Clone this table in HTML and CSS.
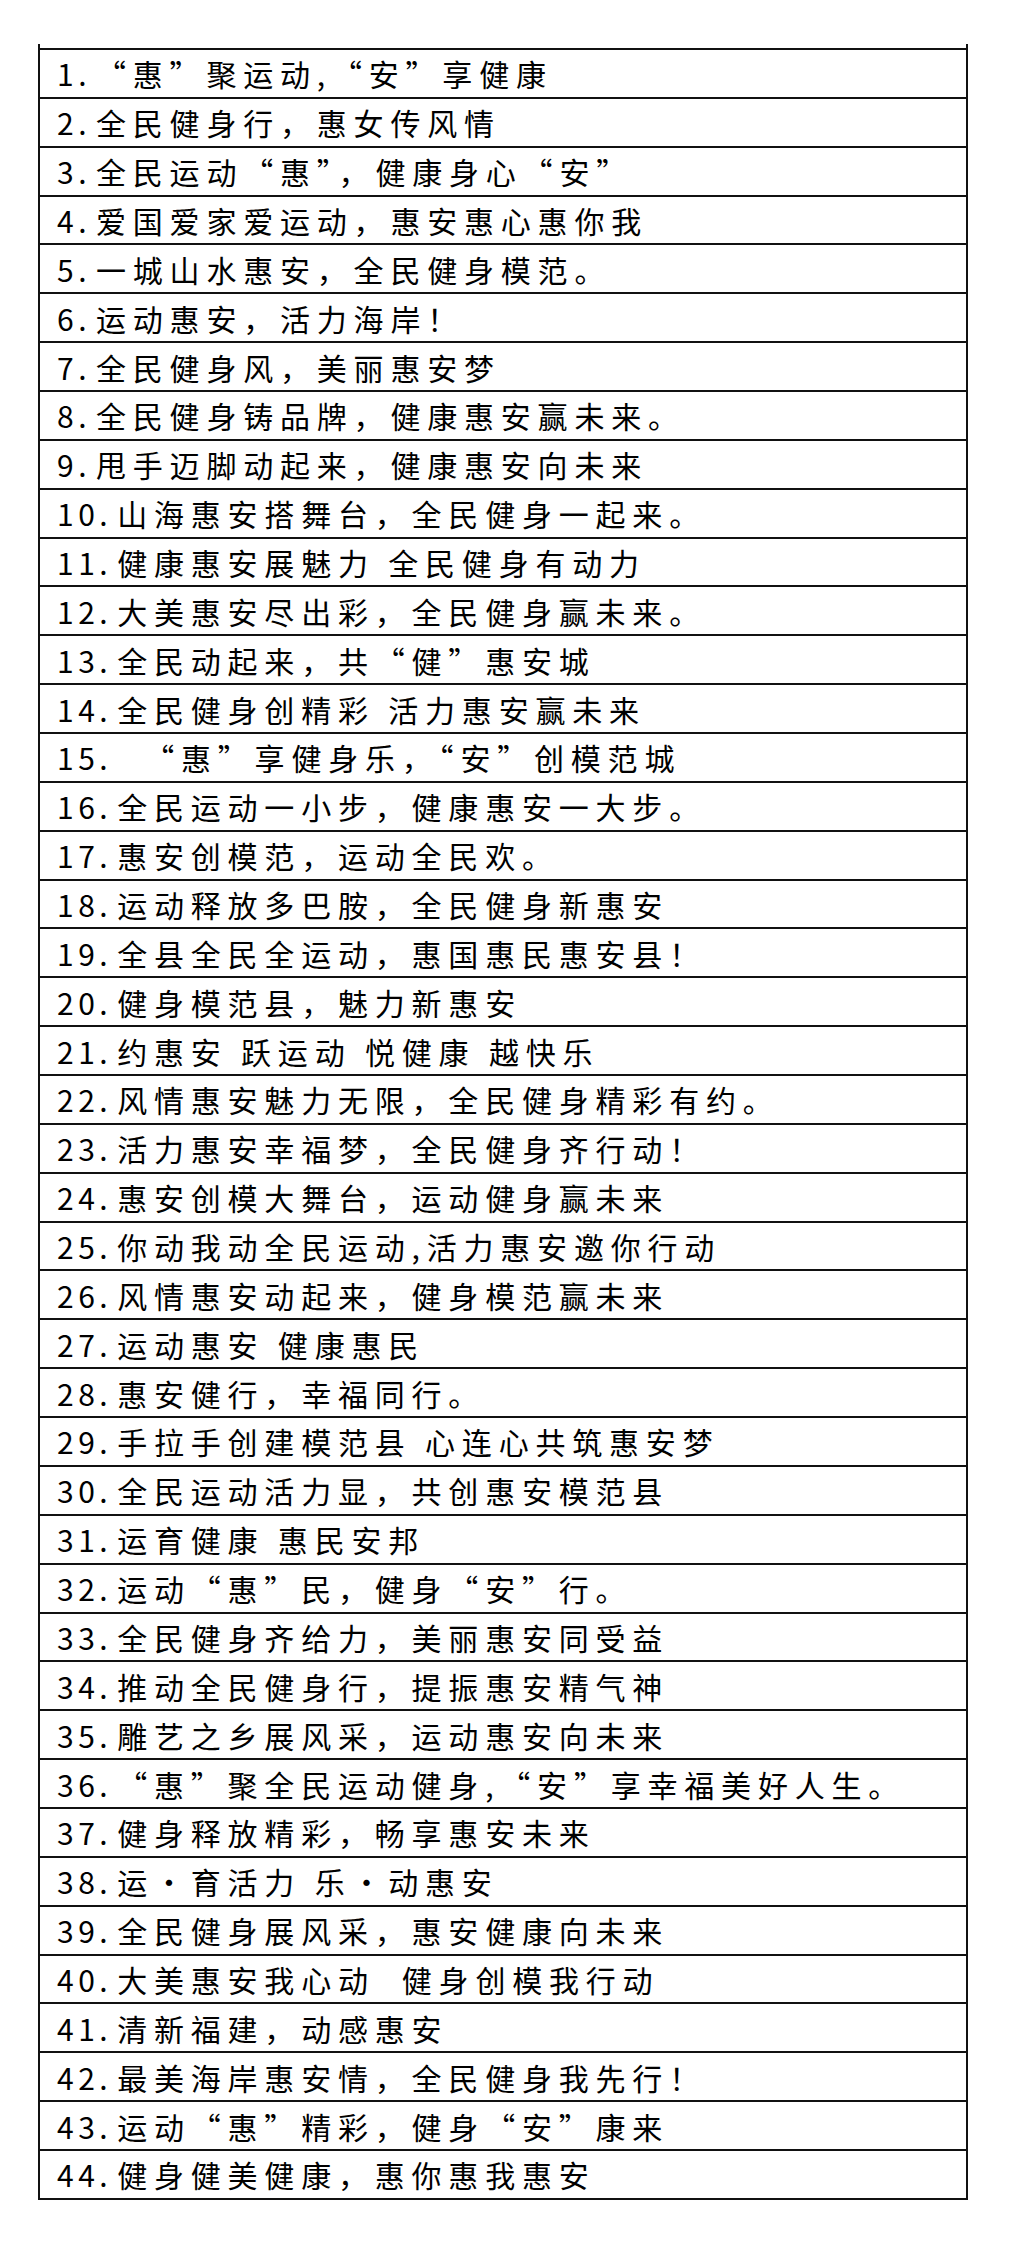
FILE: index.html
```html
<!DOCTYPE html>
<html lang="zh-CN">
<head>
<meta charset="utf-8">
<title>惠安全民健身口号</title>
<link rel="stylesheet" href="styles.css">
</head>
<body>
<div class="sheet">
  <div class="row"><span class="num">1.</span>“惠”聚运动,“安”享健康</div>
  <div class="row"><span class="num">2.</span>全民健身行，惠女传风情</div>
  <div class="row"><span class="num">3.</span>全民运动“惠”，健康身心“安”</div>
  <div class="row"><span class="num">4.</span>爱国爱家爱运动，惠安惠心惠你我</div>
  <div class="row"><span class="num">5.</span>一城山水惠安，全民健身模范。</div>
  <div class="row"><span class="num">6.</span>运动惠安，活力海岸！</div>
  <div class="row"><span class="num">7.</span>全民健身风，美丽惠安梦</div>
  <div class="row"><span class="num">8.</span>全民健身铸品牌，健康惠安赢未来。</div>
  <div class="row"><span class="num">9.</span>甩手迈脚动起来，健康惠安向未来</div>
  <div class="row"><span class="num">10.</span>山海惠安搭舞台，全民健身一起来。</div>
  <div class="row"><span class="num">11.</span>健康惠安展魅力 全民健身有动力</div>
  <div class="row"><span class="num">12.</span>大美惠安尽出彩，全民健身赢未来。</div>
  <div class="row"><span class="num">13.</span>全民动起来，共“健”惠安城</div>
  <div class="row"><span class="num">14.</span>全民健身创精彩 活力惠安赢未来</div>
  <div class="row"><span class="num">15.</span>  “惠”享健身乐，“安”创模范城</div>
  <div class="row"><span class="num">16.</span>全民运动一小步，健康惠安一大步。</div>
  <div class="row"><span class="num">17.</span>惠安创模范，运动全民欢。</div>
  <div class="row"><span class="num">18.</span>运动释放多巴胺，全民健身新惠安</div>
  <div class="row"><span class="num">19.</span>全县全民全运动，惠国惠民惠安县！</div>
  <div class="row"><span class="num">20.</span>健身模范县，魅力新惠安</div>
  <div class="row"><span class="num">21.</span>约惠安 跃运动 悦健康 越快乐</div>
  <div class="row"><span class="num">22.</span>风情惠安魅力无限，全民健身精彩有约。</div>
  <div class="row"><span class="num">23.</span>活力惠安幸福梦，全民健身齐行动！</div>
  <div class="row"><span class="num">24.</span>惠安创模大舞台，运动健身赢未来</div>
  <div class="row"><span class="num">25.</span>你动我动全民运动,活力惠安邀你行动</div>
  <div class="row"><span class="num">26.</span>风情惠安动起来，健身模范赢未来</div>
  <div class="row"><span class="num">27.</span>运动惠安 健康惠民</div>
  <div class="row"><span class="num">28.</span>惠安健行，幸福同行。</div>
  <div class="row"><span class="num">29.</span>手拉手创建模范县 心连心共筑惠安梦</div>
  <div class="row"><span class="num">30.</span>全民运动活力显，共创惠安模范县</div>
  <div class="row"><span class="num">31.</span>运育健康 惠民安邦</div>
  <div class="row"><span class="num">32.</span>运动“惠”民，健身“安”行。</div>
  <div class="row"><span class="num">33.</span>全民健身齐给力，美丽惠安同受益</div>
  <div class="row"><span class="num">34.</span>推动全民健身行，提振惠安精气神</div>
  <div class="row"><span class="num">35.</span>雕艺之乡展风采，运动惠安向未来</div>
  <div class="row"><span class="num">36.</span>“惠”聚全民运动健身,“安”享幸福美好人生。</div>
  <div class="row"><span class="num">37.</span>健身释放精彩，畅享惠安未来</div>
  <div class="row"><span class="num">38.</span>运·育活力 乐·动惠安</div>
  <div class="row"><span class="num">39.</span>全民健身展风采，惠安健康向未来</div>
  <div class="row"><span class="num">40.</span>大美惠安我心动  健身创模我行动</div>
  <div class="row"><span class="num">41.</span>清新福建，动感惠安</div>
  <div class="row"><span class="num">42.</span>最美海岸惠安情，全民健身我先行！</div>
  <div class="row"><span class="num">43.</span>运动“惠”精彩，健身“安”康来</div>
  <div class="row"><span class="num">44.</span>健身健美健康，惠你惠我惠安</div>
</div>
</body>
</html>
```

FILE: styles.css
```css
html, body {
  margin: 0;
  padding: 0;
  background: #ffffff;
}

body {
  font-family: "Noto Sans CJK SC", "Noto Sans", sans-serif;
  color: #000000;
}

.sheet {
  box-sizing: border-box;
  width: 930px;
  margin: 44px 0 0 38px;
  padding-top: 4px;
  border-left: 2px solid #111111;
  border-right: 2px solid #111111;
  display: flex;
  flex-direction: column;
}

.row {
  box-sizing: border-box;
  height: 48.86px;
  border-top: 2px solid #111111;
  display: flex;
  align-items: center;
  padding-left: 17px;
  font-size: 30px;
  line-height: 1;
  letter-spacing: 6.8px;
  white-space: pre;
  overflow: hidden;
}

.row:last-child {
  border-bottom: 2px solid #111111;
  height: 50.86px;
}

.num {
  letter-spacing: 4.5px;
  margin-right: 5px;
}
```
